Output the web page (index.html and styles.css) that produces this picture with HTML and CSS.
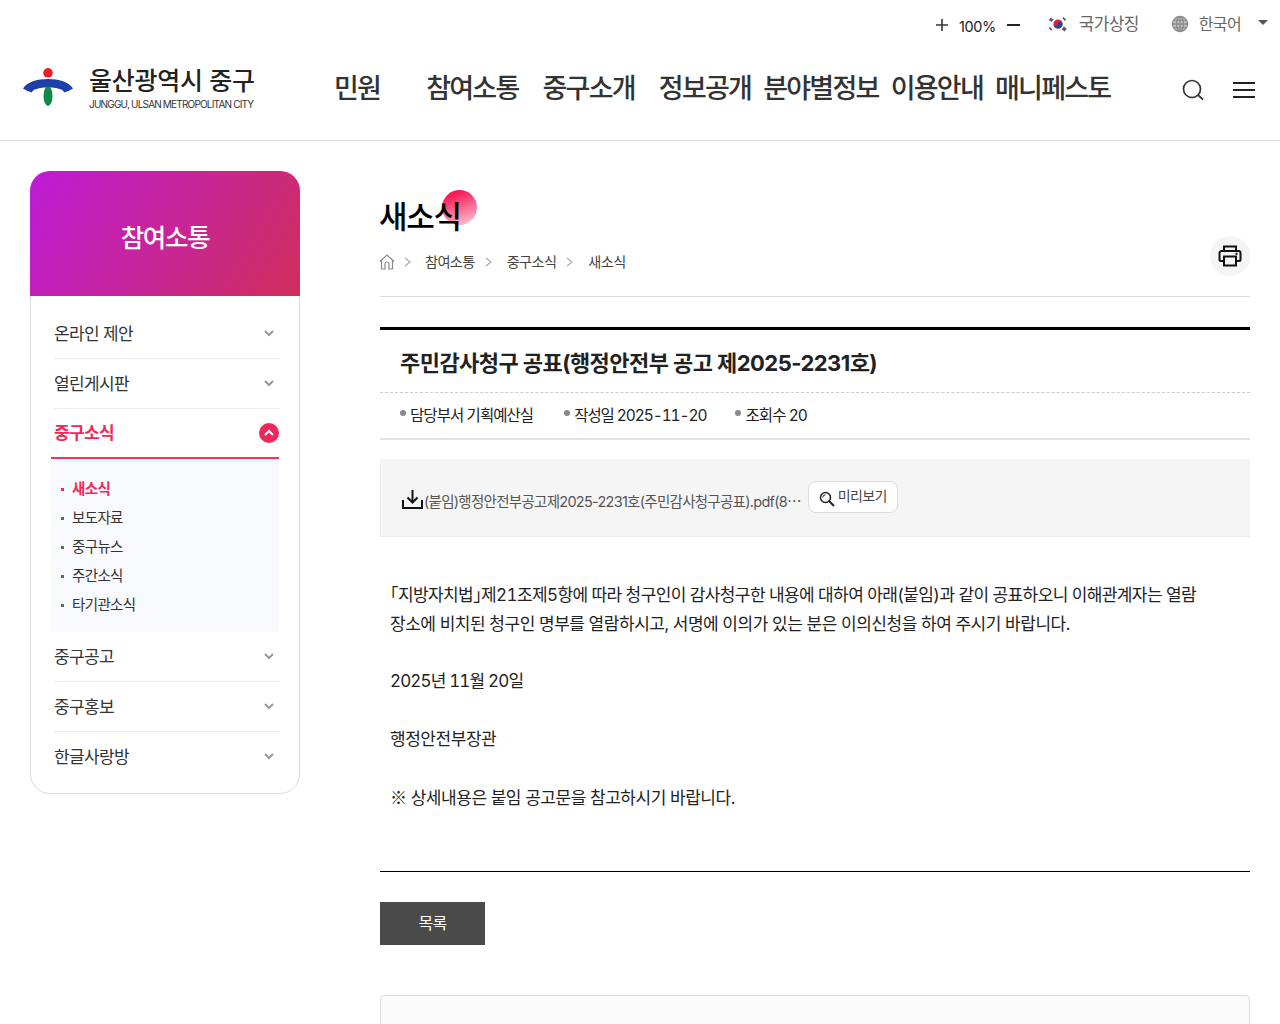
FILE: index.html
```html
<!DOCTYPE html>
<html lang="ko">
<head>
  <meta charset="UTF-8">
  <title>새소식 - 울산광역시 중구</title>
  <link rel="stylesheet" href="styles.css">
</head>
<body>

  <!-- Header -->
  <header class="site-header">
    <div class="util-bar">
      <div class="zoom-ctrl">
        <svg class="zoom-icon" width="14" height="14" viewBox="0 0 14 14"><path d="M7 1v12M1 7h12" stroke="#333" stroke-width="1.6"/></svg>
        <span class="zoom-val">100%</span>
        <svg class="zoom-icon" width="14" height="14" viewBox="0 0 14 14"><path d="M1 7h13" stroke="#222" stroke-width="2"/></svg>
      </div>
      <a class="util-link symbol-link">
        <svg width="20" height="18" viewBox="0 0 20 18">
          <circle cx="10" cy="9" r="4.6" fill="#d8213b"/>
          <path d="M5.4 9a4.6 4.6 0 0 0 9.2 0c0-1.3-1-2.3-2.3-2.3S10 7.700 10 9s-1 2.300-2.300 2.300S5.400 10.300 5.400 9z" fill="#1d4a9c"/>
          <g stroke="#555" stroke-width="1.700">
            <path d="M1.500 5.500l2-2.500M3 6.500l2-2.500"/>
            <path d="M15 2.500l2.500 3"/>
            <path d="M1.500 12.500l2.200 2.500"/>
            <path d="M16.500 12l-2 3M18 13l-2 3"/>
          </g>
        </svg>
        <span>국가상징</span>
      </a>
      <a class="util-link lang-link">
        <svg width="18" height="18" viewBox="0 0 18 18" fill="none" stroke="#8a8a8a" stroke-width="1.300">
          <circle cx="9" cy="9" r="7.500" fill="#c4c4c4"/>
          <ellipse cx="9" cy="9" rx="3.500" ry="7.500"/>
          <path d="M9 1.500v15M1.500 9h15M2.500 5.300h13M2.500 12.700h13"/>
        </svg>
        <span>한국어</span>
        <i class="caret"></i>
      </a>
    </div>

    <div class="main-bar">
      <a class="logo">
        <svg width="50" height="38" viewBox="0 0 50 38">
          <circle cx="25" cy="4.800" r="4.800" fill="#e8202a"/>
          <path d="M0 20.500C4 14 14 11 25 11s21 3 25 9.500c-6-3.500-15-5-25-5s-19 1.500-25 5zM0 20.500c6-3.500 15-5 25-5s19 1.500 25 5c-3 2-6 3-9 4 0-3-7-5-16-5s-16 2-16 5c-3-1-6-2-9-4z" fill="#1f3fa8"/>
          <ellipse cx="25" cy="28" rx="4.500" ry="10" fill="#0d8a4a"/>
        </svg>
        <div class="logo-text">
          <strong>울산광역시 중구</strong>
          <small>JUNGGU, ULSAN METROPOLITAN CITY</small>
        </div>
      </a>
      <nav class="gnb">
        <a class="gnb-wide">민원</a>
        <a class="gnb-mid">참여소통</a>
        <a class="gnb-mid">중구소개</a>
        <a>정보공개</a>
        <a>분야별정보</a>
        <a>이용안내</a>
        <a>매니페스토</a>
      </nav>
      <div class="head-icons">
        <svg width="24" height="24" viewBox="0 0 24 24" fill="none" stroke="#333" stroke-width="1.700"><circle cx="11" cy="11" r="8.500"/><path d="M17 17l5 4.500"/></svg>
        <svg width="22" height="18" viewBox="0 0 22 18" fill="none" stroke="#222" stroke-width="2"><path d="M0 2h22M0 9h22M0 16h22"/></svg>
      </div>
    </div>
  </header>

  <div class="wrap">

    <!-- Side menu -->
    <aside class="side">
      <h2 class="side-title">참여소통</h2>
      <ul class="side-menu">
        <li class="side-item"><span>온라인 제안</span><svg class="chev" width="10" height="8" viewBox="0 0 10 8"><path d="M1 2l4 4 4-4" fill="none" stroke="#999" stroke-width="2"/></svg></li>
        <li class="side-item"><span>열린게시판</span><svg class="chev" width="10" height="8" viewBox="0 0 10 8"><path d="M1 2l4 4 4-4" fill="none" stroke="#999" stroke-width="2"/></svg></li>
        <li class="side-item active">
          <span>중구소식</span>
          <i class="up-badge"><svg width="10" height="8" viewBox="0 0 10 8"><path d="M1 6l4-4 4 4" fill="none" stroke="#fff" stroke-width="2"/></svg></i>
        </li>
        <li class="side-sub">
          <ul>
            <li class="current">새소식</li>
            <li>보도자료</li>
            <li>중구뉴스</li>
            <li>주간소식</li>
            <li>타기관소식</li>
          </ul>
        </li>
        <li class="side-item"><span>중구공고</span><svg class="chev" width="10" height="8" viewBox="0 0 10 8"><path d="M1 2l4 4 4-4" fill="none" stroke="#999" stroke-width="2"/></svg></li>
        <li class="side-item"><span>중구홍보</span><svg class="chev" width="10" height="8" viewBox="0 0 10 8"><path d="M1 2l4 4 4-4" fill="none" stroke="#999" stroke-width="2"/></svg></li>
        <li class="side-item last"><span>한글사랑방</span><svg class="chev" width="10" height="8" viewBox="0 0 10 8"><path d="M1 2l4 4 4-4" fill="none" stroke="#999" stroke-width="2"/></svg></li>
      </ul>
    </aside>

    <!-- Content -->
    <main class="content">
      <div class="page-head">
        <h1 class="page-title"><i class="title-dot"></i><span>새소식</span></h1>
        <div class="crumb-row">
          <div class="crumbs">
            <svg width="16" height="16" viewBox="0 0 16 16" fill="none" stroke="#888" stroke-width="1.200"><path d="M1 7.500L8 1l7 6.500M2.500 6.500V15h3.500v-5a2 2 0 0 1 4 0v5h3.500V6.500"/></svg>
            <svg class="crumb-sep" width="8" height="10" viewBox="0 0 8 10"><path d="M1 1l5 4-5 4" fill="none" stroke="#aaa" stroke-width="1.200"/></svg>
            <span>참여소통</span>
            <svg class="crumb-sep" width="8" height="10" viewBox="0 0 8 10"><path d="M1 1l5 4-5 4" fill="none" stroke="#aaa" stroke-width="1.200"/></svg>
            <span>중구소식</span>
            <svg class="crumb-sep" width="8" height="10" viewBox="0 0 8 10"><path d="M1 1l5 4-5 4" fill="none" stroke="#aaa" stroke-width="1.200"/></svg>
            <span>새소식</span>
          </div>
          <a class="print-btn">
            <svg width="24" height="24" viewBox="0 0 24 24" fill="none" stroke="#111" stroke-width="2"><path d="M6 7V2.500h12V7"/><path d="M6 17H3a1.500 1.500 0 0 1-1.500-1.500V9A2 2 0 0 1 3.500 7h17a2 2 0 0 1 2 2v6.500A1.500 1.500 0 0 1 21 17h-3"/><rect x="6" y="12.500" width="12" height="9"/><path d="M17.500 9.800h2"/></svg>
          </a>
        </div>
      </div>

      <article class="view">
        <h3 class="view-title">주민감사청구 공표(행정안전부 공고 제2025-2231호)</h3>
        <div class="view-meta">
          <span class="meta-dept">담당부서 기획예산실</span>
          <span class="meta-date">작성일 2025-11-20</span>
          <span class="meta-hit">조회수 20</span>
        </div>
        <div class="attach">
          <svg width="21" height="19" viewBox="0 0 21 19" fill="none" stroke="#111" stroke-width="2"><path d="M10.500 0v12M5.500 7.500l5 5 5-5"/><path d="M1 10v8h19v-8"/></svg>
          <span class="attach-name">(붙임)행정안전부공고제2025-2231호(주민감사청구공표).pdf(8<span class="cjk">…</span></span>
          <a class="preview-btn">
            <svg width="16" height="16" viewBox="0 0 16 16" fill="none" stroke="#222" stroke-width="1.500"><circle cx="6.500" cy="6.500" r="5"/><path d="M10 10l5 5" stroke-width="2"/><path d="M3.800 6.500a2.700 2.700 0 0 1 2.700-2.700" stroke-width="1"/></svg>
            <span>미리보기</span>
          </a>
        </div>
        <div class="view-body">
          <p><span class="cjk half">「</span>지방자치법<span class="cjk half">」</span>제21조제5항에 따라 청구인이 감사청구한 내용에 대하여 아래(붙임)과 같이 공표하오니 이해관계자는 열람<br>장소에 비치된 청구인 명부를 열람하시고, 서명에 이의가 있는 분은 이의신청을 하여 주시기 바랍니다.</p>
          <p>&nbsp;</p>
          <p class="date-line">2025년 11월 20일</p>
          <p>&nbsp;</p>
          <p>행정안전부장관</p>
          <p>&nbsp;</p>
          <p><span class="cjk">※</span> 상세내용은 붙임 공고문을 참고하시기 바랍니다.</p>
        </div>
      </article>

      <a class="list-btn">목록</a>
      <div class="bottom-box"></div>
    </main>
  </div>

</body>
</html>
```

FILE: styles.css
```css
* {
  box-sizing: border-box;
}

html, body {
  height: 1024px;
  overflow: hidden;
}

body {
  margin: 0;
  font-family: "Inter", "Noto Sans CJK KR", "Noto Sans", sans-serif;
  font-variant-numeric: tabular-nums;
  color: #111;
  background: #fff;
  letter-spacing: -0.04em;
}

ul {
  list-style: none;
  margin: 0;
  padding: 0;
}

.cjk {
  font-family: "Noto Sans CJK KR", sans-serif;
}

.half {
  font-feature-settings: "halt";
}

/* header */
.site-header {
  height: 141px;
  border-bottom: 1px solid #ddd;
}

.util-bar {
  height: 50px;
  display: flex;
  justify-content: flex-end;
  align-items: center;
  padding-right: 12px;
}

.zoom-ctrl {
  display: flex;
  align-items: center;
  gap: 10px;
  margin-right: 28px;
  font-size: 15px;
  color: #222;
}

.zoom-val {
  font-size: 14.500px;
  font-variant-numeric: normal;
  letter-spacing: -0.03em;
  padding-top: 3px;
}

.util-link {
  display: flex;
  align-items: center;
  font-size: 16px;
  color: #666;
  line-height: 24px;
  margin-top: -2px;
}

.symbol-link {
  gap: 11px;
  margin-right: 32px;
  font-size: 17px;
}

.lang-link {
  gap: 10px;
}

.caret {
  width: 0;
  height: 0;
  margin-left: 7px;
  margin-top: -4px;
  border-left: 5px solid transparent;
  border-right: 5px solid transparent;
  border-top: 5px solid #555;
}

.main-bar {
  height: 90px;
  display: flex;
  align-items: flex-start;
  padding: 0 25px 0 23px;
}

.logo {
  display: flex;
  align-items: flex-start;
  gap: 16px;
  width: 311px;
  padding-top: 18px;
}

.logo-text {
  display: flex;
  flex-direction: column;
  margin-top: -4px;
}

.logo-text strong {
  font-size: 25px;
  font-weight: 500;
  line-height: 34px;
  color: #222;
  letter-spacing: -0.01em;
}

.logo-text small {
  font-size: 10px;
  line-height: 14px;
  margin-top: -1px;
  color: #333;
  letter-spacing: -0.08em;
  white-space: nowrap;
}

.gnb {
  display: flex;
  gap: 12px;
  padding-top: 20px;
}

.gnb a {
  font-size: 27px;
  font-weight: 500;
  line-height: 38px;
  color: #333;
  letter-spacing: -0.065em;
  white-space: nowrap;
}

.gnb-wide {
  margin-right: 34px;
}

.gnb-mid {
  margin-right: 12px;
}

.head-icons {
  display: flex;
  align-items: center;
  gap: 28px;
  padding-top: 28px;
  margin-left: auto;
}

/* layout */
.wrap {
  display: flex;
  align-items: flex-start;
  padding: 30px 30px 0;
}

/* side menu */
.side {
  width: 270px;
  flex: none;
  border: 1px solid #ddd;
  border-radius: 20px;
  padding-bottom: 11px;
}

.side-title {
  margin: -1px -1px 0;
  height: 125px;
  padding-top: 4px;
  display: flex;
  align-items: center;
  justify-content: center;
  border-radius: 20px 20px 0 0;
  background: linear-gradient(120deg, #bd1bd6 0%, #d12e5c 100%);
  color: #fff;
  font-size: 25.500px;
  font-weight: 500;
  letter-spacing: -0.05em;
}

.side-menu {
  padding: 13px 19px 0 23px;
}

.side-item {
  height: 50px;
  padding-bottom: 2px;
  display: flex;
  align-items: center;
  justify-content: space-between;
  padding-right: 6px;
  font-size: 17px;
  color: #333;
  border-bottom: 1px solid #eee;
}

.side-item.last {
  padding-bottom: 3px;
  border-bottom: 0;
}

.side-item.active {
  height: 50px;
  padding-bottom: 3px;
  margin-left: -3px;
  margin-right: 1px;
  padding-left: 3px;
  padding-right: 0;
  color: #f0285a;
  font-weight: 700;
  border-bottom: 2px solid #f0335f;
}

.up-badge {
  width: 20px;
  height: 20px;
  margin-top: 2px;
  border-radius: 50%;
  background: #f0285a;
  display: flex;
  align-items: center;
  justify-content: center;
}

.side-sub {
  margin: 0 1px 0 -3px;
  padding: 15px 10px 13px;
  background: #f8f9fc;
}

.side-sub li {
  position: relative;
  height: 29px;
  line-height: 29px;
  padding-left: 11px;
  font-size: 14.500px;
  color: #333;
}

.side-sub li::before {
  content: "";
  position: absolute;
  left: 0;
  top: 14px;
  width: 3px;
  height: 3px;
  background: #666;
}

.side-sub .current {
  color: #f0285a;
  font-weight: 700;
}

.side-sub .current::before {
  background: #f0285a;
}

/* content */
.content {
  width: 870px;
  margin-left: 80px;
}

.page-head {
  height: 126px;
  border-bottom: 1px solid #ddd;
}

.page-title {
  position: relative;
  margin: 0;
  padding-top: 23px;
  font-size: 31px;
  font-weight: 500;
  line-height: 46px;
  color: #000;
  letter-spacing: -0.04em;
}

.page-title span {
  position: relative;
  margin-left: -1px;
}

.title-dot {
  position: absolute;
  left: 62px;
  top: 19px;
  width: 35px;
  height: 35px;
  border-radius: 50%;
  background: linear-gradient(160deg, #f5205a 20%, #fbd0dc 100%);
}

.crumb-row {
  display: flex;
  align-items: flex-start;
  justify-content: space-between;
}

.crumbs {
  display: flex;
  align-items: center;
  margin-left: -1px;
  font-size: 14.200px;
  letter-spacing: -0.045em;
  line-height: 20px;
  color: #444;
  padding-top: 12px;
}

.crumb-sep {
  margin: 0 13px 0 9px;
}

.crumbs span + .crumb-sep {
  margin-left: 10px;
  margin-right: 14px;
}

.print-btn {
  width: 40px;
  height: 40px;
  border-radius: 50%;
  background: #f5f5f5;
  display: flex;
  align-items: center;
  justify-content: center;
  margin-top: -4px;
}

.view {
  margin-top: 30px;
  border-top: 3px solid #000;
}

.view-title {
  margin: 0;
  padding: 0 20px;
  height: 63px;
  line-height: 67px;
  font-size: 22px;
  font-weight: 700;
  font-variant-numeric: normal;
  color: #222;
  border-bottom: 1px dashed #ccc;
  letter-spacing: -0.025em;
}

.view-meta {
  height: 47px;
  display: flex;
  align-items: center;
  padding: 0 0 4px 20px;
  font-size: 15.500px;
  letter-spacing: -0.06em;
  color: #222;
  border-bottom: 2px solid #e2e2e2;
}

.view-meta span {
  position: relative;
  padding-left: 10px;
}

.view-meta span::before {
  content: "";
  position: absolute;
  left: 0;
  top: 7px;
  width: 6px;
  height: 6px;
  border-radius: 50%;
  background: #888;
}

.meta-dept {
  margin-right: 31px;
}

.view-meta .meta-date {
  margin-right: 29px;
  letter-spacing: -0.07em;
}

.attach {
  margin-top: 19px;
  height: 78px;
  display: flex;
  align-items: center;
  padding-left: 21px;
  background: #f5f5f5;
  border-left: 1px solid #eee;
  border-bottom: 1px solid #eee;
}

.attach-name {
  margin-left: 1px;
  margin-top: 6px;
  font-size: 14.500px;
  font-variant-numeric: normal;
  color: #555;
  letter-spacing: -0.05em;
  white-space: nowrap;
}

.attach svg:first-child {
  margin-top: 4px;
}

.preview-btn {
  display: flex;
  align-items: center;
  gap: 3px;
  height: 32px;
  margin-left: 7px;
  margin-top: -2px;
  padding: 0 10px 0 10px;
  background: #fff;
  border: 1px solid #ddd;
  border-radius: 8px;
  font-size: 14px;
  color: #444;
}

.preview-btn span {
  margin-top: -3px;
}

.view-body {
  padding: 43px 10px 0;
  height: 335px;
  border-bottom: 1px solid #000;
  font-size: 17px;
  line-height: 28.800px;
  letter-spacing: -0.027em;
  color: #222;
}

.view-body p {
  margin: 0;
}

.view-body p:first-child::first-line {
  letter-spacing: -0.035em;
}

.view-body .date-line {
  letter-spacing: -0.05em;
}

.list-btn {
  display: flex;
  align-items: center;
  justify-content: center;
  width: 105px;
  height: 43px;
  margin-top: 30px;
  padding-bottom: 3px;
  background: #4a4a4a;
  color: #fff;
  font-size: 16px;
}

.bottom-box {
  height: 80px;
  margin-top: 50px;
  background: #fafafa;
  border: 1px solid #ddd;
  border-radius: 4px 4px 0 0;
}
```
